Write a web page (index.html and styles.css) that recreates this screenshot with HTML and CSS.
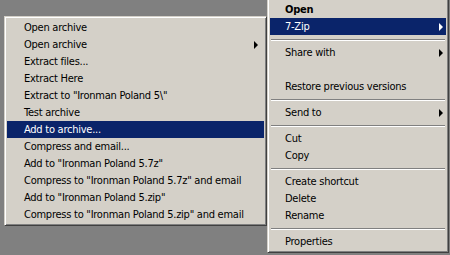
FILE: index.html
```html
<!DOCTYPE html>
<html lang="en">
<head>
    <meta charset="UTF-8">
    <title>7-Zip context menu</title>
    <link rel="stylesheet" href="styles.css">
</head>
<body>
    <div class="desk">
        <ul class="menu menu-zip">
            <li>Open archive</li>
            <li class="has-sub">Open archive<span class="arrow"></span></li>
            <li>Extract files...</li>
            <li>Extract Here</li>
            <li>Extract to "Ironman Poland 5\"</li>
            <li>Test archive</li>
            <li class="active">Add to archive...</li>
            <li>Compress and email...</li>
            <li>Add to "Ironman Poland 5.7z"</li>
            <li>Compress to "Ironman Poland 5.7z" and email</li>
            <li>Add to "Ironman Poland 5.zip"</li>
            <li>Compress to "Ironman Poland 5.zip" and email</li>
        </ul>
        <ul class="menu menu-main">
            <li class="default">Open</li>
            <li class="active has-sub">7-Zip<span class="arrow"></span></li>
            <li class="sep"></li>
            <li class="has-sub">Share with<span class="arrow"></span></li>
            <li class="blank"></li>
            <li>Restore previous versions</li>
            <li class="sep"></li>
            <li class="has-sub">Send to<span class="arrow"></span></li>
            <li class="sep"></li>
            <li>Cut</li>
            <li>Copy</li>
            <li class="sep"></li>
            <li>Create shortcut</li>
            <li>Delete</li>
            <li>Rename</li>
            <li class="sep"></li>
            <li>Properties</li>
        </ul>
    </div>
</body>
</html>
```

FILE: styles.css
```css
html, body {
    margin: 0;
    height: 100%;
    overflow: hidden;
}
body {
    background-color: #808080;
    font-family: "DejaVu Sans Condensed", "DejaVu Sans", sans-serif;
    font-size: 11px;
    letter-spacing: -0.25px;
    color: #000;
}
.desk {
    display: flex;
    align-items: flex-start;
    padding-left: 4px;
}
.menu {
    list-style: none;
    margin: 0;
    padding: 2px;
    background: #d4d0c8;
    border: 1px solid;
    border-color: #d4d0c8 #404040 #404040 #d4d0c8;
    box-shadow: inset 1px 1px #fff, inset -1px -1px #808080;
}
.menu-zip {
    width: 257px;
    margin-top: 16px;
}
.menu-main {
    width: 176px;
    margin-top: -2px;
}
.menu li {
    height: 17px;
    line-height: 17px;
    padding-left: 17px;
    display: flex;
    align-items: center;
    justify-content: space-between;
    white-space: nowrap;
}
.menu-main li {
    padding-left: 15px;
}
.menu li.active {
    background: #0a246a;
    color: #fff;
}
.menu li.default {
    font-weight: bold;
}
.menu li.sep {
    height: 9px;
    padding: 0 1px;
}
.menu li.sep::before {
    content: "";
    flex: 1;
    height: 0;
    border-top: 1px solid #808080;
    border-bottom: 1px solid #fff;
}
.arrow {
    width: 0;
    height: 0;
    border-left: 4px solid #000;
    border-top: 4px solid transparent;
    border-bottom: 4px solid transparent;
    margin-right: 6px;
}
.menu-main .arrow {
    margin-right: 3px;
}
.active .arrow {
    border-left-color: #fff;
}
```
